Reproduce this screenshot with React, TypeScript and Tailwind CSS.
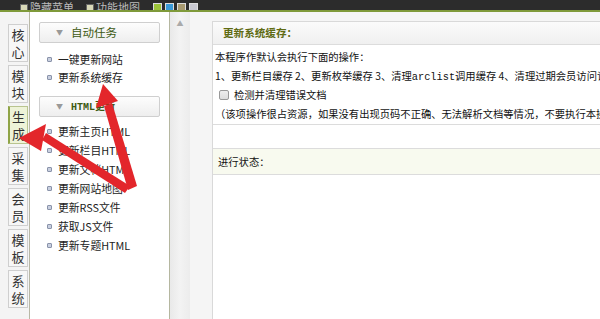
import React from "react";

const font = { fontFamily: '"SimSun","Noto Sans CJK SC","Liberation Sans",sans-serif' };

function Tab({ label, active }: { label: string; active?: boolean }) {
  return (
    <div
      className={
        "w-[20px] h-[38px] shrink-0 flex flex-col items-center justify-center text-[13px] leading-[17px] border " +
        (active
          ? "bg-[#eef3d8] border-[#b9c48f] border-l-[2px] border-l-[#8fa447] text-[#333]"
          : "bg-[#f7f7f7] border-[#cfcfcf] text-[#333]")
      }
    >
      <span>{label[0]}</span>
      <span>{label[1]}</span>
    </div>
  );
}

function Header({ label, mono }: { label: string; mono?: boolean }) {
  return (
    <div className="mx-[9px] h-[21px] border border-[#cfcfcf] rounded-[2px] bg-gradient-to-b from-[#fdfdfd] to-[#eeeeee] flex items-center pl-[16px] whitespace-nowrap">
      <span className="text-[#999] text-[7px] mr-[8px]">▼</span>
      <span className={"text-[#3d5a12] " + (mono ? "text-[10px] font-bold" : "text-[11.5px]")} style={mono ? { fontFamily: '"Liberation Mono",monospace' } : undefined}>
        {mono ? (
          <>
            HTML<span style={font}>更新</span>
          </>
        ) : (
          label
        )}
      </span>
    </div>
  );
}

function Item({ label }: { label: string }) {
  return (
    <div className="h-[19px] flex items-center pl-[17px] text-[10.8px] text-[#222] whitespace-nowrap">
      <span className="w-[5px] h-[5px] shrink-0 rounded-[1px] border border-[#8a93aa] bg-[#c9d0e0] mr-[6px]" />
      <span>{label}</span>
    </div>
  );
}

export default function App() {
  return (
    <div className="w-[600px] h-[319px] overflow-hidden bg-white relative" style={font}>
      {/* top bar */}
      <div className="h-[10px] bg-[#2c2c2c] overflow-hidden relative flex items-end border-b-[2px] border-b-[#7f9a3a] box-content">
        <div className="flex items-center h-[14px] -mb-[4px] text-[11px] text-[#bbb] pl-[20px] whitespace-nowrap">
          <span className="w-[8px] h-[7px] bg-[#d8d8b8] border border-[#666] mr-[2px]" />
          <span className="mr-[12px]">隐藏菜单</span>
          <span className="w-[8px] h-[7px] bg-[#d8d8b8] border border-[#666] mr-[2px]" />
          <span className="mr-[13px]">功能地图</span>
          <span className="w-[9px] h-[9px] bg-[#9cc43a] border border-[#ddd] mr-[3px]" />
          <span className="w-[9px] h-[9px] bg-[#3a9ad8] border border-[#ddd] mr-[3px]" />
          <span className="w-[9px] h-[9px] bg-[#a89a70] border border-[#ddd] mr-[3px]" />
          <span className="w-[9px] h-[9px] bg-[#c8c8d0] border border-[#ddd]" />
        </div>
      </div>

      <div className="flex h-[307px]">
        {/* left tabs */}
        <div className="w-[30px] shrink-0 bg-[#f4f4f4] border-r border-r-[#b8b8a6] flex flex-col items-end pr-[1px] pt-[12px] gap-[3px]">
          <Tab label="核心" />
          <Tab label="模块" />
          <Tab label="生成" active />
          <Tab label="采集" />
          <Tab label="会员" />
          <Tab label="模板" />
          <Tab label="系统" />
        </div>

        {/* menu */}
        <div className="w-[140px] shrink-0 bg-white border-r border-r-[#b5b7a0] pt-[10px]">
          <Header label="自动任务" />
          <div className="pt-[7px] pb-[9px]">
            <Item label="一键更新网站" />
            <div className="-mt-[1px]">
              <Item label="更新系统缓存" />
            </div>
          </div>
          <Header label="HTML更新" mono />
          <div className="pt-[5px]">
            <Item label="更新主页HTML" />
            <Item label="更新栏目HTML" />
            <Item label="更新文档HTML" />
            <Item label="更新网站地图" />
            <Item label="更新RSS文件" />
            <Item label="获取JS文件" />
            <Item label="更新专题HTML" />
          </div>
        </div>

        {/* scroll strip */}
        <div className="w-[20px] shrink-0 bg-gradient-to-r from-[#e9e9e9] via-[#f3f3f3] to-[#ececec] flex justify-center pt-[8px]">
          <span className="text-[7px] text-[#aaa] leading-none">▲</span>
        </div>
        <div className="w-[22px] shrink-0 bg-[#f5f5f5]" />

        {/* main */}
        <div className="flex-1 min-w-0 overflow-hidden pt-[9px] bg-[#f5f5f5]">
          <div className="h-full bg-white border-l border-t border-[#d9d9d9] text-[10.3px] text-[#111]">
            <div className="h-[23px] bg-gradient-to-b from-[#fbfbfb] to-[#f0f0f0] border-b border-b-[#dcdcdc] flex items-center pl-[10px]">
              <span className="font-bold text-[#5f6b12] text-[10.6px]">更新系统缓存：</span>
            </div>
            <div className="pl-[2px] pt-[3px] leading-[18.5px] whitespace-nowrap">
              <div>本程序作默认会执行下面的操作：</div>
              <div>
                1、更新栏目缓存 2、更新枚举缓存 3、清理<span style={{ fontFamily: '"Liberation Mono",monospace' }}>arclist</span>调用缓存 4、清理过期会员访问记录
              </div>
              <div className="flex items-center pl-[4px]">
                <span className="w-[10px] h-[10px] shrink-0 border border-[#999] rounded-[2px] bg-gradient-to-b from-[#eee] to-[#ddd] mr-[5px]" />
                <span>检测并清理错误文档</span>
              </div>
              <div>（该项操作很占资源，如果没有出现页码不正确、无法解析文档等情况，不要执行本操作）</div>
            </div>
            <div className="h-[24px] border-t border-[#dcdcdc] mt-[1px]" />
            <div className="h-[27px] bg-[#f8faef] border-t border-b border-[#dcdcdc] flex items-center pl-[5px]">
              进行状态：
            </div>
          </div>
        </div>
      </div>

      {/* red arrows */}
      <svg className="absolute left-0 top-0 pointer-events-none" width="600" height="319">
        <g fill="#e3262b" stroke="none">
          <polygon points="128,190 137,186 112,103 104,106" />
          <polygon points="103,84 96,108 118,101" />
          <polygon points="130,186 125,193 42,140 46,133" />
          <polygon points="19,138 46,124 41,151" />
        </g>
      </svg>
    </div>
  );
}
